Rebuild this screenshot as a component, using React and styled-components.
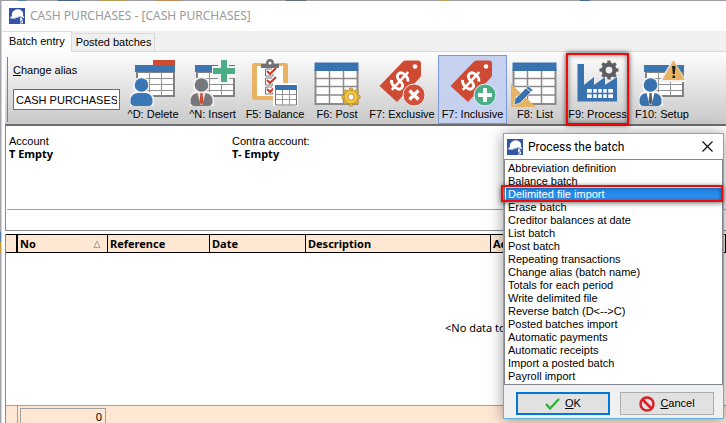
import React, { useState } from "react";
import styled, { createGlobalStyle, css } from "styled-components";

const Global = createGlobalStyle`
  * { box-sizing: border-box; }
  html, body, #root { height: 100%; }
  body {
    margin: 0;
    overflow: hidden;
    background: #9b9ba3;
    color: #000;
    font: 11px/13px "Liberation Sans", Arial, sans-serif;
  }
  button, input, select { font: inherit; color: inherit; }
`;

const Desktop = styled.div`
  min-height: 100%;
  display: flex;
  padding: 1px 0 0 1px;
  background:
    linear-gradient(#4d7fa8, #4d7fa8) 0 232px / 2px 10px no-repeat,
    linear-gradient(#c59a3a, #c59a3a) 0 242px / 2px 11px no-repeat,
    linear-gradient(90deg, #9b9ba3 0 18px, #5b7fa8 18px 26px, #9b9ba3 26px 58px, #48658c 58px 80px, #9b9ba3 80px 100px, #b79a52 100px 126px, #9b9ba3 126px 156px, #b98b58 156px 182px, #9b9ba3 182px 286px, #5f6c80 286px 306px, #9b9ba3 306px 440px, #b9a057 440px 450px, #9b9ba3 450px 580px, #466a92 580px 590px, #9b9ba3 590px) 0 0 / 100% 1px no-repeat,
    #a3a3aa;
`;

const Window = styled.main`
  flex: 1;
  min-width: 0;
  height: calc(100vh - 1px);
  display: flex;
  flex-direction: column;
  border-left: 1px solid #d4d4d4;
  background: #fff;
`;

const TitleBar = styled.header`
  flex: none;
  display: flex;
  align-items: center;
  gap: 5px;
  height: 30px;
  padding-left: 7px;
`;

const Title = styled.h1`
  margin: 0;
  font: 12px/16px "Noto Sans", "Open Sans", sans-serif;
  color: #9a9a9a;
  white-space: nowrap;
`;

const TabStrip = styled.div`
  flex: none;
  display: flex;
  align-items: flex-end;
  height: 21px;
  background: #f0f0f0;
  box-shadow: inset 0 -1px #d9d9d9;
`;

const Tab = styled.button`
  height: 19px;
  padding: 0 3px 0 4px;
  border: 1px solid #d9d9d9;
  border-left: 0;
  background: #f0f0f0;
  white-space: nowrap;
  ${(p) => p.$active && css`
    height: 21px;
    padding: 0 6px 1px 7px;
    border-bottom: 0;
    background: #fff;
  `}
`;

const Toolbar = styled.div`
  flex: none;
  display: flex;
  height: 72px;
  margin-left: 3px;
  padding: 3px 0 0 2px;
  background: linear-gradient(#fdfdfd, #c9c9c9);
`;

const AliasField = styled.label`
  flex: none;
  display: flex;
  flex-direction: column;
  gap: 12px;
  width: 118px;
  margin: 2px 0;
  padding: 7px 6px 0 5px;
  border-left: 1px solid #808080;
`;

const AliasInput = styled.input`
  width: 107px;
  height: 21px;
  padding: 0 2px;
  border: 1px solid #6d6d6d;
  background: #fff;
`;

const ToolList = styled.div`
  display: flex;
  gap: 2px;
  min-width: 0;
`;

const Tool = styled.button`
  position: relative;
  flex: none;
  display: flex;
  flex-direction: column;
  align-items: center;
  width: ${(p) => p.$width}px;
  height: 69px;
  padding: 4px 0 0;
  border: 1px solid ${(p) => (p.$pressed ? "#7a96df" : "transparent")};
  background: ${(p) => (p.$pressed ? "#c5d1ef" : "transparent")};
  white-space: nowrap;
  svg { flex: none; display: block; }
`;

const ToolCaption = styled.span`
  margin-top: 1px;
`;

const ToolMark = styled.span`
  position: absolute;
  inset: -3px 2px -2px;
  border: 2px solid #f00a0a;
  box-shadow: 0 0 5px rgba(0, 0, 0, 0.75), inset 0 0 5px rgba(0, 0, 0, 0.5);
  pointer-events: none;
`;

const AccountPanel = styled.section`
  flex: none;
  height: 107px;
  margin-left: 3px;
  padding: 9px 0 0 3px;
  border: solid #8a8a8a;
  border-width: 2px 0 1px 1px;
  border-top-color: #6d6d6d;
`;

const Accounts = styled.div`
  display: grid;
  grid-template-columns: 223px 1fr;
  height: 75px;
  margin-left: -2px;
  padding-left: 2px;
  border-bottom: 1px solid #a0a0a0;
`;

const Account = styled.div`
  display: flex;
  flex-direction: column;
`;

const AccountValue = styled.strong`
  font: bold 11px/12px "Noto Sans", sans-serif;
`;

const Grid = styled.section`
  flex: 1;
  min-height: 0;
  display: flex;
  flex-direction: column;
  margin: 3px 0 0 3px;
  border-left: 1px solid #8a8a8a;
`;

const GridTable = styled.table`
  flex: none;
  width: 100%;
  table-layout: fixed;
  border-collapse: separate;
  border-spacing: 0;
`;

const HeadCell = styled.th`
  width: ${(p) => (p.$width ? `${p.$width}px` : "auto")};
  height: 19px;
  padding: 0 6px 0 2px;
  border: solid #000;
  border-width: 1px ${(p) => p.$edge || 1}px 1px 0;
  background: #ffe8d3;
  font: bold 11px/16px "Noto Sans", sans-serif;
  text-align: left;
  white-space: nowrap;
`;

const HeadContent = styled.span`
  display: flex;
  align-items: center;
  justify-content: space-between;
`;

const EmptyNote = styled.p`
  flex: 1;
  margin: 0;
  padding: 68px 0 0 439px;
  font: 11px/14px "Noto Sans", sans-serif;
  white-space: nowrap;
`;

const GridFooter = styled.footer`
  flex: none;
  display: flex;
  height: 18px;
  padding-left: 11px;
  border-top: 1px solid #a0a0a0;
  background: #ffe8d3;
`;

const FooterCell = styled.div`
  flex: 1;
  padding: 2px 0 0 2px;
  border-left: 1px solid #a0a0a0;
`;

const RowCount = styled.output`
  display: block;
  width: 86px;
  height: 15px;
  padding: 2px 3px 0 0;
  border: 1px solid #a0a0a0;
  border-bottom: 0;
  font: 11px/12px "Noto Sans", sans-serif;
  text-align: right;
`;

const Dialog = styled.section`
  position: absolute;
  top: 133px;
  right: 2px;
  width: 221px;
  border: 1px solid #5fb2e0;
  background: #f0f0f0;
  box-shadow: 0 1px 14px rgba(0, 0, 0, 0.4);
`;

const DialogHeader = styled.header`
  display: flex;
  align-items: center;
  gap: 5px;
  height: 25px;
  padding: 0 10px 0 3px;
  background: #fff;
`;

const DialogTitle = styled.h2`
  flex: 1;
  margin: 0;
  font: 12px/16px Roboto, sans-serif;
`;

const CloseButton = styled.button`
  display: flex;
  padding: 0;
  border: 0;
  background: none;
`;

const ListArea = styled.div`
  position: relative;
`;

const ProcessList = styled.select`
  display: block;
  width: 100%;
  height: 226px;
  padding: 2px 1px;
  border: 1px solid #82878f;
  border-radius: 0;
  background: #fff;
  outline: 0;
  overflow: hidden;
  scrollbar-width: none;
`;

const ProcessOption = styled.option`
  height: 13px;
  min-height: 13px;
  padding: 0 2px;
  line-height: 13px;
  &:checked {
    background: linear-gradient(#1c7fdc, #3399ff);
    color: #fff;
    -webkit-text-fill-color: #fff;
  }
`;

const OptionMark = styled.span`
  position: absolute;
  top: 26px;
  left: -3px;
  right: 0;
  height: 17px;
  border: 2px solid #f00a0a;
  box-shadow: 0 1px 5px rgba(0, 0, 0, 0.6), inset 0 0 4px rgba(0, 0, 0, 0.4);
  pointer-events: none;
`;

const Actions = styled.div`
  display: grid;
  grid-template-columns: 1fr 1fr;
  gap: 10px;
  padding: 7px 9px 3px 12px;
`;

const ActionButton = styled.button`
  display: flex;
  align-items: center;
  justify-content: center;
  gap: 5px;
  height: 23px;
  padding: 0;
  border: ${(p) => (p.$primary ? "2px solid #0078d7" : "1px solid #adadad")};
  background: #e1e1e1;
`;

const Logo = () => (
  <svg width="16" height="16" viewBox="0 0 16 16" aria-hidden="true">
    <rect width="16" height="16" fill="#3654a5" />
    <path d="M3 8Q2 4 6 2q4-2 7 1 2 2 1 5 2 1 1 2-5-2-9 0-3 1-5 0 0-1 2-2z" fill="#fff" />
    <path d="M2 10q3 1.500 6-.5t6 0" stroke="#aebde3" fill="none" />
    <path d="M11 10l2 1M13.500 11.500h-2v1.500h2v2h-2.500" stroke="#fff" fill="none" />
  </svg>
);

const Person = ({ color, tie, shirt }) => (
  <g>
    <path d="M0 46V38q0-5 5-7-3-3-2-7 1-7 8-7t8 7q1 4-2 7 7 2 7 9v6z" fill="#f3f3f3" />
    <circle cx="11.500" cy="25" r="6.800" fill={color} />
    <path d="M.5 43q-1-9 7-10h8q8 1 7 10-1 3-4 3h-14q-3 0-4-3z" fill={color} />
    {tie && <path d="M7.500 33h8l-3 12h-2z" fill={shirt} />}
    {tie && <path d="M10.500 33h2l1 9-2 3-2-3z" fill={tie} />}
  </g>
);

const SmallTable = () => (
  <g>
    <path d="M7 12h37v24H7z" fill="#fff" stroke="#828282" strokeWidth="2" />
    <path d="M8 18.500h35M8 24.500h35M8 30.500h35M19.500 12v24M31.500 12v24" stroke="#929292" fill="none" />
    <path d="M5 5h40v7H5z" fill="#3c76b3" />
  </g>
);

const BigTable = () => (
  <g>
    <path d="M1.500 10h42v34h-42z" fill="#fff" stroke="#8b8b8b" strokeWidth="2" />
    <path d="M2 18.500h41M2 26.500h41M2 35h41M15.500 10v34M29.500 10v34" stroke="#8b8b8b" strokeWidth="1.500" fill="none" />
    <path d="M.5 2.500h44V11H.5z" fill="#3873b0" />
  </g>
);

const Tag = () => (
  <g>
    <path d="M.5 26L24 1.500Q25 .5 27 .5h12q3 0 3 3v11q0 2-1 3L18 42z" fill="#cf4a32" />
    <circle cx="36" cy="6.500" r="2.300" fill="#fff" />
    <g transform="rotate(43 21 21)" fill="none" stroke="#fff" strokeWidth="2.800">
      <path d="M27 16q-2-3-6-3-6 0-6 4t6 4 6 4-6 4q-5 0-7-3" />
      <path d="M21 9v24" strokeWidth="2.500" />
    </g>
  </g>
);

const gearTeeth = [0, 45, 90, 135, 180, 225, 270, 315];

const Gear = ({ x, y, r, color, hole }) => (
  <g transform={`translate(${x} ${y})`} fill={color}>
    {gearTeeth.map((a) => (
      <path key={a} d={`M-2 -${r - 2}L-1.500 -${r + 2}H1.500L2 -${r - 2}z`} transform={`rotate(${a})`} />
    ))}
    <circle r={r} />
    <circle r={r * 0.45} fill={hole} />
  </g>
);

const glyphs = {
  delete: (
    <>
      <SmallTable />
      <Person color="#3b76b5" />
      <path d="M23 0h22v6H23z" fill="#cd4a33" />
    </>
  ),
  insert: (
    <>
      <SmallTable />
      <Person color="#77787b" shirt="#f4dcd8" tie="#cd4a33" />
      <path d="M28 0h11v6h7v12h-7v6H28v-6h-6V6h6z" fill="#f6f6f6" />
      <path d="M31 0h6v8h8v6h-8v8h-6v-8h-8V8h8z" fill="#4cae87" />
    </>
  ),
  balance: (
    <>
      <rect y="3" width="36" height="37" rx="2" fill="#e8b365" />
      <path d="M5 6h26v30H5z" fill="#fff" />
      <path d="M9 8V4h5q0-5 4-5t4 5h5v4z" fill="#717276" />
      <circle cx="18" cy="3" r="1.500" fill="#fff" />
      {[8, 17, 26].map((y) => (
        <g key={y} fill="none">
          <path d={`M20 ${y + 1}h-6.500v7H21v-2`} stroke="#777" />
          <path d={`M15 ${y + 3}l3 3 6-6`} stroke="#cf3b2a" strokeWidth="2.200" />
        </g>
      ))}
      <path d="M21 23h25v23H21z" fill="#fff" />
      <path d="M23.500 29v16h21V29" stroke="#777" fill="#fff" />
      <path d="M24 34.500h20M24 39.500h20M30.500 30v15M37.500 30v15" stroke="#999" />
      <path d="M23 25h22v5H23z" fill="#3873b0" />
    </>
  ),
  post: (
    <>
      <BigTable />
      <g stroke="#b99432" strokeWidth="1">
        <Gear x={37} y={37} r={7} color="#f5c53b" hole="#fff" />
      </g>
    </>
  ),
  exclusive: (
    <>
      <Tag />
      <circle cx="35" cy="35" r="11" fill="#d24f3c" stroke="#eee" />
      <path d="M30.500 30.500l9 9m0-9l-9 9" stroke="#fff" strokeWidth="3.200" />
    </>
  ),
  inclusive: (
    <>
      <Tag />
      <circle cx="35" cy="35" r="11" fill="#4cae87" stroke="#e8eef5" />
      <path d="M35 28v14M28 35h14" stroke="#fff" strokeWidth="4" />
    </>
  ),
  list: (
    <>
      <BigTable />
      <path d="M-1 24v23h25z" fill="#e8b365" />
      <path d="M4 35v7h7z" fill="#eee" />
      <path d="M3 39L16 26l5 4L8 43l-6 2z" fill="#3873b0" stroke="#eee" strokeWidth=".7" />
      <path d="M14 28l5 4" stroke="#eee" />
    </>
  ),
  process: (
    <>
      <path d="M2.500 41.500V4H9v21l10-8v8l11-8v8l12-8v24.500z" fill="#3873b0" />
      <path d="M12 29h26v9H12z" fill="#fff" />
      <path d="M12 33.500h26M17.500 29v9M22.500 29v9M27.500 29v9M32.500 29v9" stroke="#3873b0" strokeWidth="1.500" />
      <Gear x={34} y={10} r={7.500} color="#5d5e61" hole="#eee" />
    </>
  ),
  setup: (
    <>
      <SmallTable />
      <Person color="#3873b0" shirt="#fff" tie="#5d5e61" />
      <path d="M34-1L48 22H20z" fill="#f0f0f0" />
      <path d="M34.500 1L45 19.500H24z" fill="#e8b365" stroke="#e8b365" strokeLinejoin="round" />
      <path d="M33 6h3.500l-.7 8h-2zM33.500 15.500h2.500V18h-2.500z" fill="#222" />
    </>
  ),
};

const tools = [
  { id: "delete", caption: "^D: Delete", width: 56 },
  { id: "insert", caption: "^N: Insert", width: 59 },
  { id: "balance", caption: "F5: Balance", width: 62 },
  { id: "post", caption: "F6: Post", width: 58 },
  { id: "exclusive", caption: "F7: Exclusive", width: 68 },
  { id: "inclusive", caption: "F7: Inclusive", width: 69, pressed: true },
  { id: "list", caption: "F8: List", width: 52 },
  { id: "process", caption: "F9: Process", width: 69, marked: true },
  { id: "setup", caption: "F10: Setup", width: 56 },
];

const columns = [
  { label: "", width: 12, edge: 2 },
  { label: "No", width: 90, sorted: true },
  { label: "Reference", width: 102 },
  { label: "Date", width: 96 },
  { label: "Description", width: 185 },
  { label: "Account" },
];

const processes = [
  "Abbreviation definition",
  "Balance batch",
  "Delimited file import",
  "Erase batch",
  "Creditor balances at date",
  "List batch",
  "Post batch",
  "Repeating transactions",
  "Change alias (batch name)",
  "Totals for each period",
  "Write delimited file",
  "Reverse batch (D<-->C)",
  "Posted batches import",
  "Automatic payments",
  "Automatic receipts",
  "Import a posted batch",
  "Payroll import",
];

export default function App() {
  const [alias, setAlias] = useState("CASH PURCHASES");
  const [process, setProcess] = useState("Delimited file import");

  return (
    <Desktop>
      <Global />
      <Window>
        <TitleBar>
          <Logo />
          <Title>CASH PURCHASES - [CASH PURCHASES]</Title>
        </TitleBar>
        <TabStrip role="tablist">
          <Tab role="tab" aria-selected="true" $active>Batch entry</Tab>
          <Tab role="tab" aria-selected="false">Posted batches</Tab>
        </TabStrip>
        <Toolbar>
          <AliasField>
            <span><u>C</u>hange alias</span>
            <AliasInput value={alias} onChange={(e) => setAlias(e.target.value)} />
          </AliasField>
          <ToolList>
            {tools.map((t) => (
              <Tool key={t.id} $width={t.width} $pressed={t.pressed}>
                <svg width="46" height="47" viewBox="0 0 46 47" overflow="visible" aria-hidden="true">
                  {glyphs[t.id]}
                </svg>
                <ToolCaption>{t.caption}</ToolCaption>
                {t.marked && <ToolMark />}
              </Tool>
            ))}
          </ToolList>
        </Toolbar>
        <AccountPanel>
          <Accounts>
            <Account>
              <span>Account</span>
              <AccountValue>T Empty</AccountValue>
            </Account>
            <Account>
              <span>Contra account:</span>
              <AccountValue>T- Empty</AccountValue>
            </Account>
          </Accounts>
        </AccountPanel>
        <Grid>
          <GridTable>
            <thead>
              <tr>
                {columns.map((c) => (
                  <HeadCell key={c.label} $width={c.width} $edge={c.edge}>
                    <HeadContent>
                      {c.label}
                      {c.sorted && (
                        <svg width="8" height="8" viewBox="0 0 8 8" aria-hidden="true">
                          <path d="M4 1L7 7.500H1z" fill="none" stroke="#a0a0a0" />
                        </svg>
                      )}
                    </HeadContent>
                  </HeadCell>
                ))}
              </tr>
            </thead>
          </GridTable>
          <EmptyNote>&lt;No data to display&gt;</EmptyNote>
          <GridFooter>
            <FooterCell>
              <RowCount>0</RowCount>
            </FooterCell>
          </GridFooter>
        </Grid>
      </Window>
      <Dialog role="dialog" aria-labelledby="process-title">
        <DialogHeader>
          <Logo />
          <DialogTitle id="process-title">Process the batch</DialogTitle>
          <CloseButton aria-label="Close">
            <svg width="11" height="11" viewBox="0 0 11 11" aria-hidden="true">
              <path d="M.5.500l10 10m0-10l-10 10" stroke="#111" strokeWidth="1.200" />
            </svg>
          </CloseButton>
        </DialogHeader>
        <ListArea>
          <ProcessList
            size={17}
            aria-labelledby="process-title"
            value={process}
            onChange={(e) => setProcess(e.target.value)}
          >
            {processes.map((p) => (
              <ProcessOption key={p} value={p}>{p}</ProcessOption>
            ))}
          </ProcessList>
          <OptionMark />
        </ListArea>
        <Actions>
          <ActionButton $primary>
            <svg width="15" height="12" viewBox="0 0 15 12" aria-hidden="true">
              <path d="M1 6l4 4.500L14 1" fill="none" stroke="#2bb02f" strokeWidth="2.200" />
            </svg>
            <span><u>O</u>K</span>
          </ActionButton>
          <ActionButton>
            <svg width="16" height="16" viewBox="0 0 16 16" aria-hidden="true">
              <path d="M3 3l10 10" stroke="#dc1f26" strokeWidth="2.500" />
              <circle cx="8" cy="8" r="6.500" fill="none" stroke="#dc1f26" strokeWidth="2.500" />
            </svg>
            <span><u>C</u>ancel</span>
          </ActionButton>
        </Actions>
      </Dialog>
    </Desktop>
  );
}
